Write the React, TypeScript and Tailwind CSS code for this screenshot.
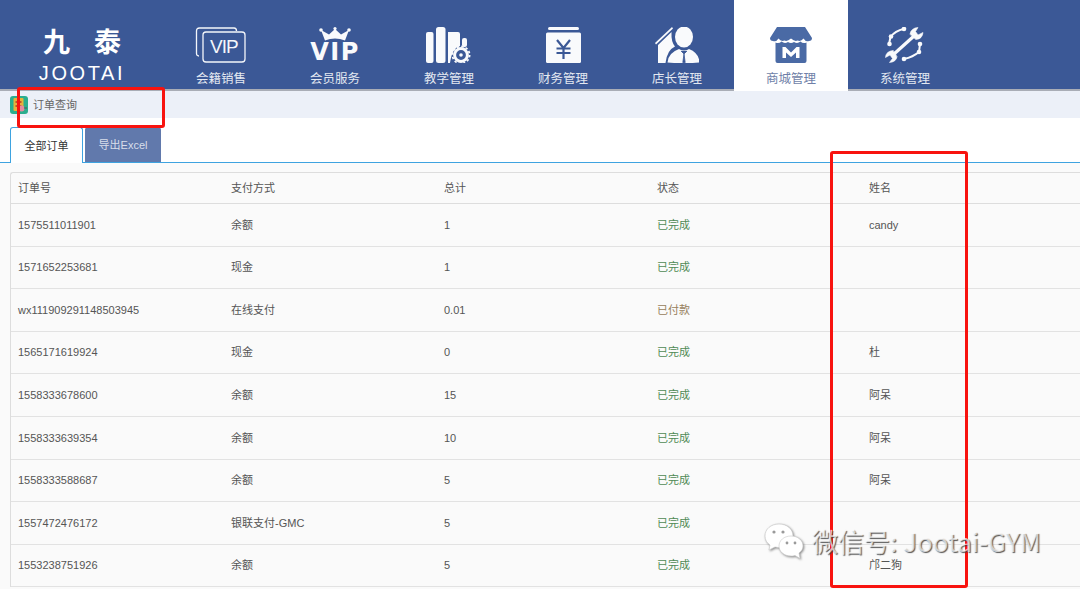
const font = "font-['Liberation_Sans','Noto_Sans_CJK_SC',sans-serif]";

function VipCard() {
  return (
    <div className="relative w-[52px] h-9">
      <svg width="52" height="36" viewBox="0 0 52 36" fill="none" stroke="#f4f6fa" strokeWidth="1.3">
        <path d="M4 29 Q1.5 29 1.5 26.5 V4 Q1.5 1 4.5 1 H39 Q41.5 1 41.5 4" />
        <rect x="8" y="5" width="42" height="30" rx="3" />
      </svg>
      <span className="absolute left-[15px] top-[8px] text-[19px] leading-[24px] text-[#f4f6fa] tracking-[-1px] font-['Liberation_Sans',sans-serif]">
        VIP
      </span>
    </div>
  );
}

function CrownVip() {
  return (
    <div className="flex flex-col items-center w-[50px] h-9">
      <svg width="32" height="14" viewBox="0 0 32 14" fill="#f9fafc">
        <circle cx="2" cy="3" r="1.8" />
        <circle cx="16" cy="1.6" r="1.6" />
        <circle cx="30" cy="3" r="1.8" />
        <path d="M2 3 L10 7.5 L16 2 L22 7.5 L30 3 L26 13.5 Q16 9.5 6 13.5 Z" />
      </svg>
      <span className="mt-[1px] text-[24px] leading-[21px] font-bold text-[#f9fafc] tracking-[1.5px] font-['DejaVu_Sans',sans-serif]">
        VIP
      </span>
    </div>
  );
}

function Books() {
  return (
    <svg width="46" height="36" viewBox="0 0 46 36" fill="#f9fafc">
      <rect x="0" y="5" width="7.5" height="31" rx="2" />
      <rect x="10" y="0" width="9.5" height="36" rx="2.5" />
      <path d="M22 5 H32 Q34 5 34 7 V19 Q26 21 24 36 H22 Z" />
      <rect x="36" y="11" width="5" height="9" rx="2" />
      <circle cx="35" cy="28" r="6.4" fill="none" stroke="#f9fafc" strokeWidth="3" />
      <circle cx="35" cy="28" r="8.6" fill="none" stroke="#f9fafc" strokeWidth="1.8" strokeDasharray="2.4 2.1" />
      <circle cx="35" cy="28" r="1.8" />
    </svg>
  );
}

function YenBox() {
  return (
    <svg width="37" height="36" viewBox="0 0 37 36">
      <rect x="3" y="0" width="31" height="3" rx="1.5" fill="#f9fafc" />
      <path d="M1 7 Q1 5.5 2.5 5.5 H34.5 Q36 5.5 36 7 V34.5 Q36 36 34.5 36 H2.5 Q1 36 1 34.5 Z" fill="#f9fafc" />
      <path d="M12 13 L18.5 21 L25 13 M11.5 21.5 H25.5 M11.5 26 H25.5 M18.5 21 V32" fill="none" stroke="#3b5896" strokeWidth="2.2" />
    </svg>
  );
}

function Manager() {
  return (
    <svg width="44" height="36" viewBox="0 0 44 36" fill="#f9fafc">
      <path d="M0 16 L17 0 L18 1.5 L1 17.5 Z" />
      <path d="M3 18 L16.5 5 Q16 15 20 19.5 Q12 23 10.5 36 H3 Z" />
      <ellipse cx="29" cy="10" rx="9" ry="10.5" />
      <path d="M12.5 35.5 Q13 26 24 22 Q29 25 34 22 Q44 26 44.5 35.5 Q28 37 12.5 35.5 Z" />
      <path d="M26 24 L29 27 L32 24 M29 27 L27.8 35.5 H30.2 Z" fill="#3b5896" stroke="#3b5896" strokeWidth="0.8" />
    </svg>
  );
}

function Store() {
  return (
    <svg width="42" height="36" viewBox="0 0 42 36" fill="#4a6aa5">
      <path d="M7 0 H35 L42 11 Q42 14 39 14 Q35.5 15 33.5 11.5 Q31 15 27.5 13.5 Q25 15 21 11.5 Q17 15 14.5 13.5 Q11 15 8.5 11.5 Q6.5 15 3 14 Q0 14 0 11 Z" />
      <path d="M5.5 15.5 Q9 17 11.5 14.5 Q14.5 17 18 15 Q21 17 24 15 Q27.5 17 30.5 14.5 Q33 17 36.5 15.5 V34 Q36.5 36 34.5 36 H7.5 Q5.5 36 5.5 34 Z" />
      <path d="M12.5 31 V20 H15.5 L21 25.5 L26.5 20 H29.5 V31 H26 V25.5 L21 30 L16 25.5 V31 Z" fill="#ffffff" />
    </svg>
  );
}

function Tools() {
  return (
    <svg width="40" height="36" viewBox="0 0 40 36" fill="none" stroke="#f9fafc" strokeLinecap="round">
      {/* wrench */}
      <path d="M9 27 L29 9" strokeWidth="3.2" />
      <path d="M25 7 Q26 1 33 0.5 L30.5 4.5 L33 8 L38 5.5 Q37.5 12 31 12.5 Z" fill="#f9fafc" strokeWidth="0.6" />
      <path d="M12 30 Q11 35 4.5 35.5 L7.5 31.5 L5 28 L0.5 30.5 Q1 24 8 23.5 Z" fill="#f9fafc" strokeWidth="0.6" />
      {/* outer arcs */}
      <path d="M4 17 L5.5 10 Q10 4 19 1.8" strokeWidth="2" />
      <path d="M35 17 L34 25 Q28 30 19 32" strokeWidth="2" />
      <circle cx="4.5" cy="17" r="2.3" fill="#f9fafc" strokeWidth="0" />
      <circle cx="6" cy="9.5" r="2.3" fill="#f9fafc" strokeWidth="0" />
      <circle cx="19" cy="2" r="2.3" fill="#f9fafc" strokeWidth="0" />
      <circle cx="35" cy="17" r="2.3" fill="#f9fafc" strokeWidth="0" />
      <circle cx="34" cy="25" r="2.3" fill="#f9fafc" strokeWidth="0" />
      <circle cx="19" cy="32" r="2.3" fill="#f9fafc" strokeWidth="0" />
    </svg>
  );
}

function WeChat() {
  return (
    <svg width="40" height="36" viewBox="0 0 40 36" className="drop-shadow-[1px_1px_1px_rgba(90,90,90,0.7)]">
      <path d="M15 1 C7 1 1 6 1 13 C1 17 3 20 6 22 L5 27 L11 24 C12 24 13 24.5 15 24.5 C23 24.5 29 19 29 13 C29 6 23 1 15 1 Z" fill="#ffffff" stroke="#c8c8c8" strokeWidth="0.6" />
      <path d="M27 13 C20 13 15 17.5 15 23 C15 28.5 20 33 27 33 C28.5 33 29.5 33 31 32.5 L36 35.5 L35 30 C37.5 28 39 26 39 23 C39 17.5 34 13 27 13 Z" fill="#ffffff" stroke="#c8c8c8" strokeWidth="0.6" />
      <circle cx="10" cy="9" r="1.6" fill="#9a9a9a" />
      <circle cx="19" cy="9" r="1.6" fill="#9a9a9a" />
      <circle cx="23" cy="20" r="1.4" fill="#9a9a9a" />
      <circle cx="31" cy="20" r="1.4" fill="#9a9a9a" />
    </svg>
  );
}

function CrumbIcon() {
  return (
    <svg width="18" height="18" viewBox="0 0 18 18">
      <rect width="18" height="18" rx="3" fill="#2aae8e" />
      <rect x="3.5" y="2" width="10" height="13" rx="1" fill="#e7b23b" />
      <rect x="5.5" y="5" width="2" height="2" fill="#c0522d" />
      <rect x="9.5" y="5" width="2" height="2" fill="#c0522d" />
      <rect x="5.5" y="9" width="6" height="2" fill="#c0522d" />
      <circle cx="11.5" cy="12.5" r="3" fill="#e58aa0" />
      <rect x="14" y="11.5" width="3" height="1" fill="#555" />
    </svg>
  );
}

const navItems = [
  { label: "会籍销售", icon: <VipCard /> },
  { label: "会员服务", icon: <CrownVip /> },
  { label: "教学管理", icon: <Books /> },
  { label: "财务管理", icon: <YenBox /> },
  { label: "店长管理", icon: <Manager /> },
  { label: "商城管理", icon: <Store />, active: true },
  { label: "系统管理", icon: <Tools /> },
];

const rows = [
  ["1575511011901", "余额", "1", "已完成", "candy"],
  ["1571652253681", "现金", "1", "已完成", ""],
  ["wx111909291148503945", "在线支付", "0.01", "已付款", ""],
  ["1565171619924", "现金", "0", "已完成", "杜"],
  ["1558333678600", "余额", "15", "已完成", "阿呆"],
  ["1558333639354", "余额", "10", "已完成", "阿呆"],
  ["1558333588687", "余额", "5", "已完成", "阿呆"],
  ["1557472476172", "银联支付-GMC", "5", "已完成", ""],
  ["1553238751926", "余额", "5", "已完成", "邝二狗"],
];

export default function App() {
  return (
    <div className={`relative w-[1080px] h-[589px] overflow-hidden bg-[#fafafa] ${font}`}>
      {/* top nav */}
      <div className="flex h-[91px] bg-[#3b5896] border-b-2 border-[#a9adb6]">
        <div className="w-[164px] shrink-0 flex flex-col items-center pt-[23px] text-white">
          <div className="flex gap-[24px] text-[27px] leading-[36px] font-bold font-['Noto_Sans_CJK_SC',sans-serif]">
            <span>九</span>
            <span>泰</span>
          </div>
          <div className="mt-[3px] text-[20px] leading-[22px] tracking-[2.6px] font-['Liberation_Sans',sans-serif]">
            JOOTAI
          </div>
        </div>
        {navItems.map((item) => (
          <div
            key={item.label}
            className={
              item.active
                ? "w-[114px] h-[91px] flex flex-col items-center pt-[27px] bg-white text-[#6f7fa8]"
                : "w-[114px] flex flex-col items-center pt-[27px] text-[#e3e8f1]"
            }
          >
            <div className="h-9 flex items-center justify-center">{item.icon}</div>
            <div className="mt-[9px] text-[12.5px] leading-[14px]">{item.label}</div>
          </div>
        ))}
      </div>

      {/* breadcrumb */}
      <div className="flex items-center h-[27px] pl-[10px] pt-[1px] gap-[5px] bg-[#ecf0f8] text-[11px] text-[#666666]">
        <CrumbIcon />
        <span className="pt-[1px]">订单查询</span>
      </div>

      {/* tabs */}
      <div className="flex items-end h-[45px] pl-[10px] gap-[2px] bg-white border-b border-[#3ea3e0]">
        <div className="w-[73px] h-[36px] -mb-px pt-[1px] flex items-center justify-center bg-white border border-b-0 border-[#3ea3e0] rounded-t-[3px] text-[11px] text-[#333333]">
          全部订单
        </div>
        <div className="w-[76px] h-[35px] pt-[1px] flex items-center justify-center bg-[#6179ac] rounded-t-[3px] text-[11px] text-[#d8deea]">
          导出Excel
        </div>
      </div>

      {/* table */}
      <div className="ml-[10px] mt-[9px] border-t border-l border-[#dddddd] rounded-tl-[3px] text-[11px] text-[#555555]">
        <div className="grid grid-cols-[213px_213px_213px_212px_1fr] items-center h-[31px] border-b border-[#dddddd]">
          {["订单号", "支付方式", "总计", "状态", "姓名"].map((h) => (
            <div key={h} className="pl-[7px]">
              {h}
            </div>
          ))}
        </div>
        {rows.map((r) => (
          <div
            key={r[0]}
            className="grid grid-cols-[213px_213px_213px_212px_1fr] items-center h-[42.6px] border-b border-[#e2e2e2]"
          >
            <div className="pl-[7px]">{r[0]}</div>
            <div className="pl-[7px]">{r[1]}</div>
            <div className="pl-[7px]">{r[2]}</div>
            <div className={r[3] === "已付款" ? "pl-[7px] text-[#97805c]" : "pl-[7px] text-[#4f8a55]"}>{r[3]}</div>
            <div className="pl-[7px]">{r[4]}</div>
          </div>
        ))}
      </div>

      {/* red annotation boxes */}
      <div className="absolute left-[17px] top-[87px] w-[148px] h-[41px] border-[3px] border-[#f8130f] rounded-[3px]" />
      <div className="absolute left-[830px] top-[151px] w-[138px] h-[437px] border-[3px] border-[#f8130f] rounded-[3px]" />

      {/* watermark */}
      <div className="absolute left-[764px] top-[523px] flex items-center gap-[8px]">
        <WeChat />
        <span className="text-[26px] leading-[36px] whitespace-nowrap text-white/70 [text-shadow:1px_1px_1px_rgba(60,60,60,0.85)] font-['Noto_Sans_CJK_SC',sans-serif]">
          微信号: Jootai-GYM
        </span>
      </div>
    </div>
  );
}
